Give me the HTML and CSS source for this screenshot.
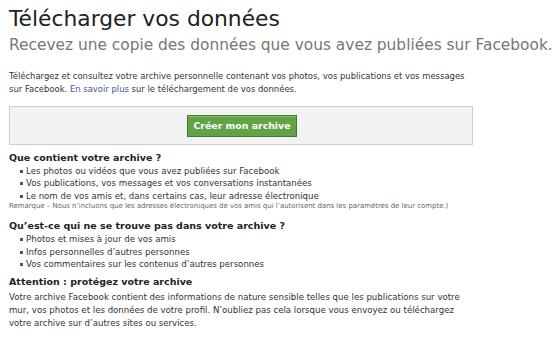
FILE: index.html
```
<!DOCTYPE html>
<html lang="fr">
<head>
<meta charset="utf-8">
<link rel="stylesheet" href="styles.css">
</head>
<body>
<div class="page">
  <h1 class="title">Télécharger vos données</h1>
  <h2 class="subtitle">Recevez une copie des données que vous avez publiées sur Facebook.</h2>
  <p class="intro">Téléchargez et consultez votre archive personnelle contenant vos photos, vos publications et vos messages sur Facebook. <a href="#" class="link">En savoir plus</a> sur le téléchargement de vos données.</p>
  <div class="box">
    <button class="btn">Créer mon archive</button>
  </div>
  <h3 class="heading h1">Que contient votre archive ?</h3>
  <ul class="list">
    <li>Les photos ou vidéos que vous avez publiées sur Facebook</li>
    <li>Vos publications, vos messages et vos conversations instantanées</li>
    <li>Le nom de vos amis et, dans certains cas, leur adresse électronique</li>
  </ul>
  <p class="note">Remarque – Nous n’incluons que les adresses électroniques de vos amis qui l’autorisent dans les paramètres de leur compte.)</p>
  <h3 class="heading h2">Qu’est-ce qui ne se trouve pas dans votre archive ?</h3>
  <ul class="list">
    <li>Photos et mises à jour de vos amis</li>
    <li>Infos personnelles d’autres personnes</li>
    <li>Vos commentaires sur les contenus d’autres personnes</li>
  </ul>
  <h3 class="heading h3">Attention : protégez votre archive</h3>
  <p class="body">Votre archive Facebook contient des informations de nature sensible telles que les publications sur votre mur, vos photos et les données de votre profil. N’oubliez pas cela lorsque vous envoyez ou téléchargez votre archive sur d’autres sites ou services.</p>
</div>
</body>
</html>
```
FILE: styles.css
```
html, body { margin: 0; padding: 0; background: #fff; }
body { font-family: "DejaVu Sans", sans-serif; color: #333; }
.page { padding: 5px 9px 0 9px; width: 542px; }
.title { margin: 0; font-size: 21.8px; font-weight: normal; color: #222; line-height: 27px; }
.subtitle { margin: 4px 0 0 0; font-size: 15.4px; font-weight: normal; color: #777; line-height: 19px; white-space: nowrap; }
.intro { margin: 15px 0 0 0; font-size: 8.45px; line-height: 13px; width: 470px; color: #333; }
.link { color: #3b5998; text-decoration: none; }
.box { margin-top: 10px; width: 462px; height: 37px; background: #f2f2f2; border: 1px solid #ccc; display: flex; justify-content: center; align-items: center; }
.btn { font-family: "DejaVu Sans", sans-serif; font-weight: bold; font-size: 9.4px; color: #fff; background: #62a346; border: 1px solid #3f7a2a; height: 22px; width: 110px; padding: 0; margin-left: 2px; box-shadow: inset 0 1px 0 #89c06f; }
.heading { margin: 7px 0 0 0; font-size: 9.5px; font-weight: bold; color: #222; line-height: 14px; }
.h1 { margin-top: 6px; }
.list { margin: 0; padding: 0 0 0 17px; list-style: none; font-size: 8.6px; line-height: 12.4px; }
.list li { position: relative; }
.list li::before { content: ""; position: absolute; left: -6px; top: 5px; width: 3px; height: 3px; background: #555; }
.note { margin: 0; font-size: 6.95px; color: #666; line-height: 9px; }
.h2 { margin-top: 8px; }
.h3 { margin-top: 5px; }
.body { margin: 2px 0 0 0; font-size: 8.6px; line-height: 12.6px; width: 466px; }
```
